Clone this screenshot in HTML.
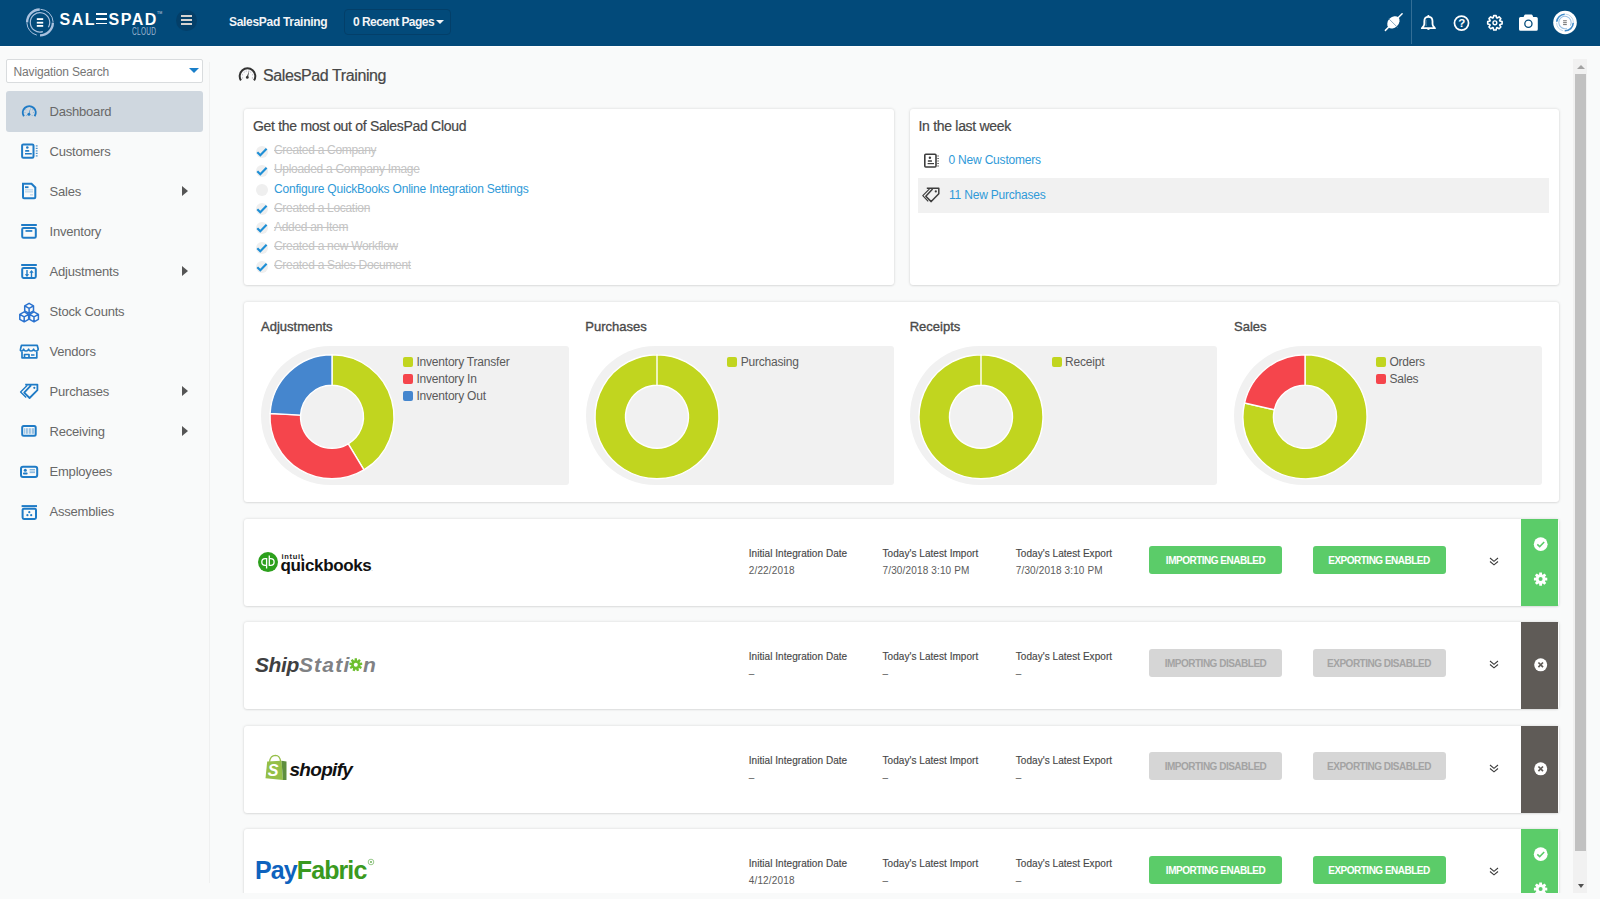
<!DOCTYPE html>
<html><head><meta charset="utf-8">
<style>
*{box-sizing:border-box}
html,body{margin:0;padding:0}
body{width:1600px;height:899px;overflow:hidden;position:relative;background:#f9fafa;font-family:"Liberation Sans",sans-serif;color:#555}
.a{position:absolute}
.nw{white-space:nowrap}
#top{left:0;top:0;width:1600px;height:46px;background:#024a7a}
.tb-txt{color:#f2f4f6;font-weight:700;font-size:12px;letter-spacing:-0.3px;line-height:14px}
#side-line{left:208.5px;top:62px;width:1px;height:821px;background:#eff0f0}
.nav{left:6px;width:197px;height:40px;border-radius:3px}
.nav .t{position:absolute;left:43.5px;top:14px;font-size:13px;line-height:14px;color:#686868;letter-spacing:-0.2px;white-space:nowrap}
.nav svg{position:absolute;left:13px;top:11px}
.nav .arr{position:absolute;left:176px;top:15px;width:0;height:0;border-left:6px solid #555;border-top:5px solid transparent;border-bottom:5px solid transparent}
.card{background:#fff;border-radius:3px;box-shadow:0 0 3px rgba(0,0,0,.15),0 1px 2px rgba(0,0,0,.06)}
.ctitle{font-size:14px;color:#474747;letter-spacing:-0.3px;line-height:16px;white-space:nowrap;-webkit-text-stroke:0.2px #474747}
.chk{font-size:12px;line-height:14px;color:#c4c4c4;text-decoration:line-through;white-space:nowrap;letter-spacing:-0.3px}
.link{color:#2f9ad8}
.ci{width:12px;height:12px;border-radius:6px;background:#efefef}
.chtitle{font-size:13px;color:#4a4a4a;line-height:14px;white-space:nowrap;font-weight:400;letter-spacing:0px;-webkit-text-stroke:0.35px #4a4a4a}
.panel{background:#f1f1f1;width:308px;height:139px;border-radius:70px 3px 3px 70px}
.leg{font-size:12px;line-height:14px;color:#5a5a5a;white-space:nowrap;letter-spacing:-0.2px}
.sq{width:10px;height:10px;border-radius:2px}
.lbl{font-size:10px;line-height:12px;color:#474747;white-space:nowrap;letter-spacing:0.05px;-webkit-text-stroke:0.15px #474747}
.val{font-size:10px;line-height:12px;color:#5b5b5b;white-space:nowrap;letter-spacing:0.15px;position:absolute;margin-top:1px}
.btn{width:133px;height:28px;border-radius:3px;font-size:10px;font-weight:700;letter-spacing:-0.5px;line-height:29px;text-align:center;white-space:nowrap}
.on{background:#5bcc69;color:#fff}
.off{background:#d6d6d6;color:#a3a3a3}
.strip{width:37px}
.sg{background:#5bcc69}
.sd{background:#5f5b57}
</style></head><body>

<!-- TOP BAR -->
<div class="a" style="left:0;top:46px;width:1600px;height:1px;background:#fff"></div>
<div id="top" class="a">
  <!-- logo -->
  <svg class="a" style="left:25px;top:7px" width="31" height="31" viewBox="0 0 31 31">
    <g fill="none" stroke="#a9c1de">
      <path d="M2.10 15.40 A12.9 12.9 0 0 1 14.77 2.50" stroke-width="2.3"/>
      <path d="M15.46 2.31 A13.1 13.1 0 0 1 28.09 14.94" stroke-width="1"/>
      <path d="M27.90 15.63 A12.9 12.9 0 0 1 15.00 28.30" stroke-width="2.3"/>
      <path d="M11.83 28.11 A13.1 13.1 0 0 1 1.92 16.09" stroke-width="1"/>
      <path d="M17.84 24.68 A9.7 9.7 0 1 1 23.40 20.25" stroke-width="1.2"/>
    </g>
    <g fill="#fff"><rect x="11.8" y="11.2" width="6.4" height="1.8"/><rect x="11.8" y="14.8" width="6.4" height="1.8"/><rect x="11.8" y="18" width="6.4" height="1.8"/></g>
  </svg>
  <div class="a nw" style="left:59.5px;top:10.5px;font-size:16px;font-weight:700;color:#fff;letter-spacing:1.5px;line-height:18px">SAL<span style="display:inline-block;width:11px;height:11.7px;position:relative;top:-0.2px;margin-right:1.5px;background:linear-gradient(#fff 0 2.1px,transparent 2.1px 4.8px,#fff 4.8px 6.9px,transparent 6.9px 9.6px,#fff 9.6px 11.7px)"></span>SPAD</div>
  <div class="a nw" style="left:157px;top:11px;font-size:3.5px;line-height:4px;color:#c8d4e2">TM</div>
  <div class="a nw" style="left:131.5px;top:26.1px;font-size:10px;color:#9fb6d2;line-height:11px;transform:scaleX(0.65);transform-origin:0 0;letter-spacing:0.5px">CLOUD</div>
  <!-- hamburger -->
  <div class="a" style="left:176px;top:10px;width:21px;height:21px;border-radius:50%;background:#033f69"></div>
  <div class="a" style="left:181px;top:15px;width:11px;height:2px;background:#d6d2cf"></div>
  <div class="a" style="left:181px;top:19px;width:11px;height:2px;background:#d6d2cf"></div>
  <div class="a" style="left:181px;top:22.5px;width:11px;height:2px;background:#d6d2cf"></div>
  <div class="a tb-txt nw" style="left:229px;top:15px">SalesPad Training</div>
  <div class="a" style="left:344px;top:9px;width:107px;height:26px;border:1px solid #033f69;border-radius:4px"></div>
  <div class="a tb-txt nw" style="left:353px;top:15px;letter-spacing:-0.55px">0 Recent Pages</div>
  <div class="a" style="left:436px;top:20px;width:0;height:0;border-top:4px solid #f2f4f6;border-left:4px solid transparent;border-right:4px solid transparent"></div>
  <!-- right icons -->
  <div class="a" style="left:1411px;top:0;width:1px;height:44px;background:#336e96"></div>
<svg class="a" style="left:1370px;top:0" width="230" height="46" viewBox="1370 0 230 46">
<path d="M1385.4 30.4 L1389.5 26.3 M1397.6 18.2 L1402.1 13.7" stroke="#fff" stroke-width="1.5" stroke-linecap="round"/>
<ellipse cx="1393.4" cy="22.3" rx="7" ry="5.2" transform="rotate(-45 1393.4 22.3)" fill="#fff"/>
<path d="M1388.9 18.8 L1397.5 27.4" stroke="#7d9fb8" stroke-width="0.9"/>
<path d="M1421.8 28.2 L1423.7 25.9 Q1424.3 25.1 1424.3 23.6 L1424.3 21.2 Q1424.3 16.9 1428.4 16.9 Q1432.5 16.9 1432.5 21.2 L1432.5 23.6 Q1432.5 25.1 1433.1 25.9 L1435 28.2 Z" fill="none" stroke="#fff" stroke-width="1.8" stroke-linejoin="round"/>
<rect x="1427.5" y="14.9" width="1.8" height="2.2" rx="0.6" fill="#fff"/>
<path d="M1426.3 28.6 Q1428.4 31.2 1430.5 28.6Z" fill="#fff"/>
<path d="M1426 20 Q1425.8 23.5 1426.2 26" stroke="#bcd0df" stroke-width="0.8" fill="none" opacity="0.7"/>
<circle cx="1461.5" cy="23.1" r="7.05" fill="none" stroke="#fff" stroke-width="1.7"/>
<text x="1461.8" y="27.4" font-family="Liberation Sans" font-weight="700" font-size="11.5" fill="#fff" text-anchor="middle">?</text>
<path d="M1493.18 17.79 L1493.70 15.60 L1496.10 15.60 L1496.62 17.79 L1497.23 18.04 L1499.14 16.86 L1500.84 18.56 L1499.66 20.47 L1499.91 21.08 L1502.10 21.60 L1502.10 24.00 L1499.91 24.52 L1499.66 25.13 L1500.84 27.04 L1499.14 28.74 L1497.23 27.56 L1496.62 27.81 L1496.10 30.00 L1493.70 30.00 L1493.18 27.81 L1492.57 27.56 L1490.66 28.74 L1488.96 27.04 L1490.14 25.13 L1489.89 24.52 L1487.70 24.00 L1487.70 21.60 L1489.89 21.08 L1490.14 20.47 L1488.96 18.56 L1490.66 16.86 L1492.57 18.04Z" fill="none" stroke="#fff" stroke-width="1.6" stroke-linejoin="round"/>
<circle cx="1494.9" cy="22.8" r="1.9" fill="none" stroke="#fff" stroke-width="1.4"/>
<path d="M1520.5 16.9 H1523.6 L1524.3 15.2 Q1524.6 14.5 1525.4 14.5 H1531.4 Q1532.2 14.5 1532.5 15.2 L1533.2 16.9 H1536.3 Q1537.8 16.9 1537.8 18.4 V29.2 Q1537.8 30.7 1536.3 30.7 H1520.5 Q1519 30.7 1519 29.2 V18.4 Q1519 16.9 1520.5 16.9Z" fill="#fff"/>
<circle cx="1528.4" cy="23.7" r="3.6" fill="none" stroke="#024a7a" stroke-width="1.3"/>
<circle cx="1565" cy="22.5" r="11.8" fill="#fff"/>
<g fill="none">
 <path d="M1556.73 21.78 A8.3 8.3 0 0 1 1564.71 14.21" stroke="#3f8bca" stroke-width="1.6"/>
 <path d="M1565.44 14.11 A8.4 8.4 0 0 1 1573.39 22.21" stroke="#b6d2ea" stroke-width="0.9"/>
 <path d="M1573.29 22.79 A8.3 8.3 0 0 1 1564.71 30.79" stroke="#3f8bca" stroke-width="1.6"/>
 <path d="M1562.83 30.61 A8.4 8.4 0 0 1 1556.61 22.79" stroke="#b6d2ea" stroke-width="0.9"/>
 <path d="M1566.81 28.43 A6.2 6.2 0 1 1 1570.37 25.60" stroke="#9cc3e6" stroke-width="1.1"/>
</g>
<g fill="#7d7d7d"><rect x="1563.1" y="20.2" width="3.7" height="1.1"/><rect x="1563.1" y="22.1" width="3.7" height="1.1"/><rect x="1563.1" y="24" width="3.7" height="1.1"/></g>
</svg>
</div>

<!-- SIDEBAR -->
<div class="a" style="left:6px;top:59px;width:197px;height:24px;background:#fff;border:1px solid #d9dcde;border-radius:2px"></div>
<div class="a nw" style="left:13.5px;top:64.5px;font-size:12px;line-height:14px;color:#767676;letter-spacing:-0.15px">Navigation Search</div>
<div class="a" style="left:189px;top:68px;width:0;height:0;border-top:5px solid #1a7fc9;border-left:5px solid transparent;border-right:5px solid transparent"></div>
<div id="side-line" class="a"></div>


<div class="a nav" style="top:91px;height:41px;background:#cfd7df"><span class="t">Dashboard</span></div>
<div class="a nav" style="top:131px"><span class="t">Customers</span></div>
<div class="a nav" style="top:171px"><span class="t">Sales</span><span class="arr"></span></div>
<div class="a nav" style="top:211px"><span class="t">Inventory</span></div>
<div class="a nav" style="top:251px"><span class="t">Adjustments</span><span class="arr"></span></div>
<div class="a nav" style="top:291px"><span class="t">Stock Counts</span></div>
<div class="a nav" style="top:331px"><span class="t">Vendors</span></div>
<div class="a nav" style="top:371px"><span class="t">Purchases</span><span class="arr"></span></div>
<div class="a nav" style="top:411px"><span class="t">Receiving</span><span class="arr"></span></div>
<div class="a nav" style="top:451px"><span class="t">Employees</span></div>
<div class="a nav" style="top:491px"><span class="t">Assemblies</span></div>

<svg class="a" style="left:0;top:0" width="210" height="540" viewBox="0 0 210 540">
<g fill="none" stroke="#1f7bc6" stroke-width="2">
 <path d="M23.9 116.3 A6.45 6.45 0 1 1 34.6 116.3"/>
 <rect x="22.1" y="144.4" width="11.4" height="13.3" rx="1.2"/>
 <path d="M23 183.7 H31.5 L35.3 187.5 V197.3 Q35.3 198.3 34.3 198.3 H24 Q23 198.3 23 197.3 Z"/>
 <rect x="22.2" y="228" width="13.6" height="9.7" rx="1.3"/>
 <rect x="22.2" y="268" width="13.6" height="9.9" rx="1.3"/>
 <rect x="22.2" y="426.1" width="13.5" height="9.7" rx="1.5"/>
 <rect x="21" y="466.8" width="16.2" height="10.1" rx="2"/>
 <rect x="22.6" y="508.8" width="13.4" height="10.1" rx="1.3"/>
</g>
<g fill="#1f7bc6">
 <path d="M28.6 114.2 L30.6 107.2 L29.4 114.6Z" />
 <circle cx="28.9" cy="114.3" r="1.5"/>
 <g opacity="0.45"><circle cx="25" cy="112.5" r="0.5"/><circle cx="25.9" cy="109.7" r="0.5"/><circle cx="33.5" cy="112.5" r="0.5"/><circle cx="32.6" cy="109.7" r="0.5"/><circle cx="26.4" cy="115.5" r="0.5"/><circle cx="32.1" cy="115.5" r="0.5"/></g>
 <circle cx="27.3" cy="147.5" r="1.3"/>
 <rect x="25.1" y="150.1" width="4.2" height="1.7" rx="0.6"/>
 <rect x="25" y="153" width="6.8" height="1.5"/>
 <g opacity="0.8"><rect x="35.8" y="145.3" width="1.8" height="1.2"/><rect x="35.8" y="147.8" width="1.8" height="1.2"/><rect x="35.8" y="150.3" width="1.8" height="1.2"/><rect x="35.8" y="152.8" width="1.8" height="1.2"/><rect x="35.8" y="155.3" width="1.8" height="1.2"/></g>
 <rect x="25" y="186.3" width="3.5" height="1.8"/>
 <g opacity="0.45"><rect x="25" y="189.5" width="8" height="0.8"/><rect x="25" y="191.5" width="8" height="0.8"/><rect x="30" y="194.5" width="3" height="0.8"/></g>
 <rect x="21.2" y="224" width="15.6" height="2"/>
 <rect x="25.5" y="230.1" width="6.8" height="1.7"/>
 <rect x="21.2" y="264" width="15.6" height="2"/>
 <path d="M26.3 270 H27.7 V274.3 H29.2 L27 277 L24.8 274.3 H26.3Z"/>
 <path d="M30.8 277 H32.2 V272.7 H33.7 L31.5 270 L29.3 272.7 H30.8Z"/>
 <g opacity="0.55"><rect x="24.3" y="428.2" width="0.9" height="5.6"/><rect x="25.9" y="428.2" width="0.9" height="5.6"/><rect x="27.3" y="428.2" width="0.9" height="5.6"/><rect x="28.9" y="428.2" width="0.9" height="5.6"/><rect x="30.3" y="428.2" width="0.9" height="5.6"/><rect x="31.9" y="428.2" width="0.9" height="5.6"/><rect x="33.2" y="428.2" width="0.9" height="5.6"/></g>
 <circle cx="25.3" cy="470.2" r="1.5"/>
 <rect x="23" y="472.5" width="4.6" height="2" rx="0.8"/>
 <g opacity="0.6"><rect x="29.6" y="469" width="5.4" height="0.9"/><rect x="29.6" y="470.6" width="5.4" height="0.9"/><rect x="29.6" y="472.2" width="5.4" height="0.9"/></g>
 <rect x="21.6" y="505.1" width="15.4" height="2"/>
 <circle cx="29.3" cy="512.2" r="1.1"/><circle cx="27.4" cy="515.2" r="1.1"/><circle cx="31.2" cy="515.2" r="1.1"/>
</g>
<g fill="none" stroke="#2a72cf" stroke-width="1.5" stroke-linejoin="round">
 <path d="M29.1 303.3 L33.5 305.8 V310.8 L29.1 313.3 L24.7 310.8 V305.8Z M24.7 305.8 L29.1 308.3 L33.5 305.8 M29.1 308.3 V313.3"/>
 <path d="M24.2 311.8 L28.6 314.3 V319.3 L24.2 321.8 L19.8 319.3 V314.3Z M19.8 314.3 L24.2 316.8 L28.6 314.3 M24.2 316.8 V321.8"/>
 <path d="M34 311.8 L38.4 314.3 V319.3 L34 321.8 L29.6 319.3 V314.3Z M29.6 314.3 L34 316.8 L38.4 314.3 M34 316.8 V321.8"/>
</g>
<g fill="none" stroke="#1f7bc6" stroke-width="1.7" stroke-linejoin="round">
 <path d="M21.5 345.3 H37.2 L38.2 349 Q38 351 36 351 Q34.2 351 33.6 349.2 Q33 351 31 351 Q29.2 351 28.6 349.2 Q28 351 26 351 Q24.2 351 23.6 349.2 Q23 351 21.2 351 Q20 350.5 20.5 349Z"/>
 <path d="M22 351.5 V357.8 H36.8 V351.5"/>
 <path d="M24.5 357.5 V354.5 H29 V357.5 M31 355 H34.5"/>
 <path d="M25.2 384.6 L32 384.6 L37.4 384.6 V390.2 L29.6 398 L24.2 392.6 L31 385.3" stroke-width="1.8"/>
 <path d="M27.3 385.2 L20.6 391.9 L26.2 397.6" stroke-width="1.4"/>
</g>
<circle cx="34.3" cy="387.8" r="1.1" fill="#1f7bc6"/>
</svg>
<!-- CONTENT -->
<div class="a nw" style="left:263px;top:66.5px;font-size:16px;line-height:18px;color:#474747;letter-spacing:-0.4px;-webkit-text-stroke:0.2px #474747">SalesPad Training</div>

<svg class="a" style="left:236px;top:64px" width="24" height="20" viewBox="236 64 24 20">
<path d="M240.96 80.35 A7.8 7.8 0 1 1 254.04 80.35" fill="none" stroke="#333" stroke-width="2"/>
<path d="M246.6 77.2 L249.2 70.4 L248 77.6Z" fill="#333"/><circle cx="247.3" cy="77.4" r="1.4" fill="#333"/>
<g fill="#8a7f9a" opacity="0.7"><circle cx="242.61" cy="77.88" r="0.55"/><circle cx="242.48" cy="74.75" r="0.55"/><circle cx="244.16" cy="72.12" r="0.55"/><circle cx="250.84" cy="72.12" r="0.55"/><circle cx="252.52" cy="74.75" r="0.55"/><circle cx="252.39" cy="77.88" r="0.55"/><circle cx="246.15" cy="71.08" r="0.55"/><circle cx="248.85" cy="71.08" r="0.55"/></g>
</svg>
<!-- card 1 -->
<div class="a card" style="left:244px;top:109px;width:649.5px;height:176px"></div>
<div class="a ctitle" style="left:253px;top:118px">Get the most out of SalesPad Cloud</div>
<div class="a ci" style="left:256px;top:145.7px"></div>
<svg class="a" style="left:256px;top:146.7px" width="12" height="10" viewBox="0 0 12 10"><path d="M1.3 5.2 L4.3 8.2 L10.6 1.8" fill="none" stroke="#1e8fd6" stroke-width="2.2"/></svg>
<div class="a chk" style="left:274px;top:143.2px">Created a Company</div>
<div class="a ci" style="left:256px;top:164.9px"></div>
<svg class="a" style="left:256px;top:165.9px" width="12" height="10" viewBox="0 0 12 10"><path d="M1.3 5.2 L4.3 8.2 L10.6 1.8" fill="none" stroke="#1e8fd6" stroke-width="2.2"/></svg>
<div class="a chk" style="left:274px;top:162.4px">Uploaded a Company Image</div>
<div class="a ci" style="left:256px;top:184.0px"></div>
<div class="a nw link" style="left:274px;top:181.5px;font-size:12px;line-height:14px;letter-spacing:-0.2px">Configure QuickBooks Online Integration Settings</div>
<div class="a ci" style="left:256px;top:203.2px"></div>
<svg class="a" style="left:256px;top:204.2px" width="12" height="10" viewBox="0 0 12 10"><path d="M1.3 5.2 L4.3 8.2 L10.6 1.8" fill="none" stroke="#1e8fd6" stroke-width="2.2"/></svg>
<div class="a chk" style="left:274px;top:200.7px">Created a Location</div>
<div class="a ci" style="left:256px;top:222.4px"></div>
<svg class="a" style="left:256px;top:223.4px" width="12" height="10" viewBox="0 0 12 10"><path d="M1.3 5.2 L4.3 8.2 L10.6 1.8" fill="none" stroke="#1e8fd6" stroke-width="2.2"/></svg>
<div class="a chk" style="left:274px;top:219.9px">Added an Item</div>
<div class="a ci" style="left:256px;top:241.6px"></div>
<svg class="a" style="left:256px;top:242.6px" width="12" height="10" viewBox="0 0 12 10"><path d="M1.3 5.2 L4.3 8.2 L10.6 1.8" fill="none" stroke="#1e8fd6" stroke-width="2.2"/></svg>
<div class="a chk" style="left:274px;top:239.1px">Created a new Workflow</div>
<div class="a ci" style="left:256px;top:260.7px"></div>
<svg class="a" style="left:256px;top:261.7px" width="12" height="10" viewBox="0 0 12 10"><path d="M1.3 5.2 L4.3 8.2 L10.6 1.8" fill="none" stroke="#1e8fd6" stroke-width="2.2"/></svg>
<div class="a chk" style="left:274px;top:258.2px">Created a Sales Document</div>

<!-- card 2 -->
<div class="a card" style="left:909.5px;top:109px;width:649px;height:176px"></div>
<div class="a ctitle" style="left:918.5px;top:118px">In the last week</div>
<div class="a" style="left:918px;top:178px;width:631px;height:34.5px;background:#f1f1f1"></div>
<div class="a nw link" style="left:948.5px;top:153px;font-size:12px;line-height:14px;letter-spacing:-0.2px">0 New Customers</div>
<div class="a nw link" style="left:949px;top:188px;font-size:12px;line-height:14px;letter-spacing:-0.2px">11 New Purchases</div>

<svg class="a" style="left:918px;top:150px" width="26" height="56" viewBox="918 150 26 56">
<g fill="none" stroke="#3d3d3d">
 <rect x="924.8" y="154.2" width="11.2" height="12.8" rx="1" stroke-width="1.6"/>
 <path d="M926.8 188.2 L933.2 188.2 L938.8 188.2 V193.8 L931.2 201.6 L925.8 196.2 L932.6 189" stroke-width="1.5" stroke-linejoin="round"/>
 <path d="M929.5 188.9 L922.8 195.6 L928.2 201.4" stroke-width="1.2" stroke-linejoin="round"/>
</g>
<g fill="#3d3d3d">
 <circle cx="929.9" cy="157.8" r="1.2"/>
 <rect x="927.8" y="160.2" width="4.2" height="1.6" rx="0.5"/>
 <rect x="927.6" y="163" width="6.4" height="1.2"/>
 <g opacity="0.8"><rect x="937.3" y="155.5" width="1.6" height="1"/><rect x="937.3" y="158" width="1.6" height="1"/><rect x="937.3" y="160.5" width="1.6" height="1"/><rect x="937.3" y="163" width="1.6" height="1"/><rect x="937.3" y="165.5" width="1.6" height="1"/></g>
 <circle cx="935.8" cy="191.4" r="1.1"/>
</g>
</svg>
<!-- charts card -->
<div class="a card" style="left:244px;top:302px;width:1314.5px;height:200px"></div>
<div class="a chtitle" style="left:261.0px;top:320px">Adjustments</div>
<div class="a panel" style="left:261.0px;top:346px"></div>
<svg class="a" style="left:261.0px;top:346px" width="142" height="142" viewBox="0 0 142 142"><path d="M71.00 8.80 A62 62 0 0 1 102.96 123.93 L87.24 97.79 A31.5 31.5 0 0 0 71.00 39.30 Z" fill="#c1d51f" stroke="#fff" stroke-width="1.4"/><path d="M102.96 123.93 A62 62 0 0 1 9.09 67.44 L39.55 69.09 A31.5 31.5 0 0 0 87.24 97.79 Z" fill="#f5454c" stroke="#fff" stroke-width="1.4"/><path d="M9.09 67.44 A62 62 0 0 1 71.00 8.80 L71.00 39.30 A31.5 31.5 0 0 0 39.55 69.09 Z" fill="#4586ce" stroke="#fff" stroke-width="1.4"/></svg>
<div class="a sq" style="left:403.0px;top:357px;background:#c1d51f"></div>
<div class="a leg" style="left:416.4px;top:355px">Inventory Transfer</div>
<div class="a sq" style="left:403.0px;top:374px;background:#f5454c"></div>
<div class="a leg" style="left:416.4px;top:372px">Inventory In</div>
<div class="a sq" style="left:403.0px;top:391px;background:#4586ce"></div>
<div class="a leg" style="left:416.4px;top:389px">Inventory Out</div>
<div class="a chtitle" style="left:585.3px;top:320px">Purchases</div>
<div class="a panel" style="left:585.8px;top:346px"></div>
<svg class="a" style="left:585.8px;top:346px" width="142" height="142" viewBox="0 0 142 142"><path d="M71.00 8.80 A62 62 0 1 1 70.99 8.80 L70.99 39.30 A31.5 31.5 0 1 0 71.00 39.30 Z" fill="#c1d51f" stroke="#fff" stroke-width="1.4"/></svg>
<div class="a sq" style="left:727.3px;top:357px;background:#c1d51f"></div>
<div class="a leg" style="left:740.7px;top:355px">Purchasing</div>
<div class="a chtitle" style="left:909.7px;top:320px">Receipts</div>
<div class="a panel" style="left:910px;top:346px;width:306.5px"></div>
<svg class="a" style="left:910px;top:346px" width="142" height="142" viewBox="0 0 142 142"><path d="M71.00 8.80 A62 62 0 1 1 70.99 8.80 L70.99 39.30 A31.5 31.5 0 1 0 71.00 39.30 Z" fill="#c1d51f" stroke="#fff" stroke-width="1.4"/></svg>
<div class="a sq" style="left:1051.7px;top:357px;background:#c1d51f"></div>
<div class="a leg" style="left:1065.1px;top:355px">Receipt</div>
<div class="a chtitle" style="left:1234.0px;top:320px">Sales</div>
<div class="a panel" style="left:1234.0px;top:346px"></div>
<svg class="a" style="left:1234.0px;top:346px" width="142" height="142" viewBox="0 0 142 142"><path d="M71.00 8.80 A62 62 0 1 1 10.55 57.00 L40.29 63.79 A31.5 31.5 0 1 0 71.00 39.30 Z" fill="#c1d51f" stroke="#fff" stroke-width="1.4"/><path d="M10.55 57.00 A62 62 0 0 1 71.00 8.80 L71.00 39.30 A31.5 31.5 0 0 0 40.29 63.79 Z" fill="#f5454c" stroke="#fff" stroke-width="1.4"/></svg>
<div class="a sq" style="left:1376.0px;top:357px;background:#c1d51f"></div>
<div class="a leg" style="left:1389.4px;top:355px">Orders</div>
<div class="a sq" style="left:1376.0px;top:374px;background:#f5454c"></div>
<div class="a leg" style="left:1389.4px;top:372px">Sales</div>

<!-- integration cards -->
<div class="a card" style="left:244px;top:519px;width:1314.5px;height:87px"></div>
<div class="a card" style="left:244px;top:622px;width:1314.5px;height:87px"></div>
<div class="a card" style="left:244px;top:725.5px;width:1314.5px;height:87px"></div>
<div class="a card" style="left:244px;top:829px;width:1314.5px;height:87px"></div>

<div class="a lbl" style="left:748.75px;top:548.3px">Initial Integration Date</div>
<div class="a val" style="left:748.75px;top:564px">2/22/2018</div>
<div class="a lbl" style="left:882.5px;top:548.3px">Today's Latest Import</div>
<div class="a val" style="left:882.5px;top:564px">7/30/2018 3:10 PM</div>
<div class="a lbl" style="left:1015.75px;top:548.3px">Today's Latest Export</div>
<div class="a val" style="left:1015.75px;top:564px">7/30/2018 3:10 PM</div>
<div class="a btn on" style="left:1149px;top:545.5px">IMPORTING ENABLED</div>
<div class="a btn on" style="left:1312.5px;top:545.5px">EXPORTING ENABLED</div>
<svg class="a" style="left:1489px;top:557px" width="10" height="9" viewBox="0 0 10 9"><path d="M1 1 L5 4.3 L9 1 M1 4.5 L5 7.8 L9 4.5" fill="none" stroke="#3a3a3a" stroke-width="1.1"/></svg>
<div class="a strip sg" style="left:1521px;top:519px;height:87px"></div>
<div class="a lbl" style="left:748.75px;top:651.3px">Initial Integration Date</div>
<div class="a val" style="left:748.75px;top:667px">–</div>
<div class="a lbl" style="left:882.5px;top:651.3px">Today's Latest Import</div>
<div class="a val" style="left:882.5px;top:667px">–</div>
<div class="a lbl" style="left:1015.75px;top:651.3px">Today's Latest Export</div>
<div class="a val" style="left:1015.75px;top:667px">–</div>
<div class="a btn off" style="left:1149px;top:648.5px">IMPORTING DISABLED</div>
<div class="a btn off" style="left:1312.5px;top:648.5px">EXPORTING DISABLED</div>
<svg class="a" style="left:1489px;top:660px" width="10" height="9" viewBox="0 0 10 9"><path d="M1 1 L5 4.3 L9 1 M1 4.5 L5 7.8 L9 4.5" fill="none" stroke="#3a3a3a" stroke-width="1.1"/></svg>
<div class="a strip sd" style="left:1521px;top:622px;height:87px"></div>
<div class="a lbl" style="left:748.75px;top:754.8px">Initial Integration Date</div>
<div class="a val" style="left:748.75px;top:770.5px">–</div>
<div class="a lbl" style="left:882.5px;top:754.8px">Today's Latest Import</div>
<div class="a val" style="left:882.5px;top:770.5px">–</div>
<div class="a lbl" style="left:1015.75px;top:754.8px">Today's Latest Export</div>
<div class="a val" style="left:1015.75px;top:770.5px">–</div>
<div class="a btn off" style="left:1149px;top:752.0px">IMPORTING DISABLED</div>
<div class="a btn off" style="left:1312.5px;top:752.0px">EXPORTING DISABLED</div>
<svg class="a" style="left:1489px;top:763.5px" width="10" height="9" viewBox="0 0 10 9"><path d="M1 1 L5 4.3 L9 1 M1 4.5 L5 7.8 L9 4.5" fill="none" stroke="#3a3a3a" stroke-width="1.1"/></svg>
<div class="a strip sd" style="left:1521px;top:725.5px;height:87px"></div>
<div class="a lbl" style="left:748.75px;top:858.3px">Initial Integration Date</div>
<div class="a val" style="left:748.75px;top:874px">4/12/2018</div>
<div class="a lbl" style="left:882.5px;top:858.3px">Today's Latest Import</div>
<div class="a val" style="left:882.5px;top:874px">–</div>
<div class="a lbl" style="left:1015.75px;top:858.3px">Today's Latest Export</div>
<div class="a val" style="left:1015.75px;top:874px">–</div>
<div class="a btn on" style="left:1149px;top:855.5px">IMPORTING ENABLED</div>
<div class="a btn on" style="left:1312.5px;top:855.5px">EXPORTING ENABLED</div>
<svg class="a" style="left:1489px;top:867px" width="10" height="9" viewBox="0 0 10 9"><path d="M1 1 L5 4.3 L9 1 M1 4.5 L5 7.8 L9 4.5" fill="none" stroke="#3a3a3a" stroke-width="1.1"/></svg>
<div class="a strip sg" style="left:1521px;top:829px;height:87px"></div>

<!-- QB logo -->
<svg class="a" style="left:256px;top:550px" width="24" height="24" viewBox="256 550 24 24">
 <circle cx="268" cy="562.1" r="10" fill="#2ca01c"/>
 <g fill="none" stroke="#fff" stroke-width="1.3">
  <path d="M266.6 565.4 H265.2 A3.4 3.4 0 0 1 265.2 558.6 H266.6 V568.6"/>
  <path d="M269.3 558.6 H270.7 A3.4 3.4 0 0 1 270.7 565.4 H269.3 V555.4"/>
 </g>
</svg>
<div class="a nw" style="left:281.5px;top:553px;font-size:7.5px;line-height:8px;font-weight:700;color:#222;letter-spacing:0.7px">intuit</div>
<div class="a nw" style="left:280.5px;top:555.5px;font-size:17px;line-height:20px;font-weight:700;color:#111;letter-spacing:-0.35px">quickbooks<span style="font-size:4px;color:#888">.</span></div>

<!-- ShipStation -->
<div class="a nw" style="left:255px;top:652.5px;font-size:21px;line-height:24px;font-weight:700;font-style:italic;color:#3f3f41;letter-spacing:-0.4px">Ship<span style="color:#808184;letter-spacing:1.2px">Stati</span><span style="display:inline-block;width:12.5px"></span><span style="color:#808184">n</span></div>
<svg class="a" style="left:348px;top:657px" width="16" height="16" viewBox="348 657 16 16">
 <path d="M354.53 660.38 L354.65 658.30 L356.95 658.30 L357.07 660.38 L357.67 660.60 L359.10 659.08 L360.86 660.56 L359.61 662.23 L359.93 662.78 L362.00 662.54 L362.40 664.80 L360.37 665.28 L360.26 665.91 L362.00 667.06 L360.86 669.04 L359.00 668.11 L358.50 668.52 L359.10 670.52 L356.95 671.30 L356.12 669.39 L355.48 669.39 L354.65 671.30 L352.50 670.52 L353.10 668.52 L352.60 668.11 L350.74 669.04 L349.60 667.06 L351.34 665.91 L351.23 665.28 L349.20 664.80 L349.60 662.54 L351.67 662.78 L351.99 662.23 L350.74 660.56 L352.50 659.08 L353.93 660.60Z" fill="#6dbf2e"/>
 <circle cx="355.8" cy="664.8" r="2" fill="#fff"/>
</svg>

<!-- Shopify -->
<svg class="a" style="left:264px;top:754px" width="24" height="28" viewBox="264 754 24 28">
 <path d="M269.5 761.8 Q270.3 755.6 275.4 755.4 Q280 755.4 280.6 761.8" fill="none" stroke="#95bf47" stroke-width="1.2"/>
 <path d="M267.2 761.5 L281.5 760.8 L283 780 L265.5 778.2 Z" fill="#95bf47"/>
 <path d="M281.5 760.8 L286.5 761.6 L286.5 780 L283 780 Z" fill="#5e8e3e"/>
 <text x="267.6" y="776.5" font-family="Liberation Sans" font-weight="700" font-style="italic" font-size="17" fill="#fff" transform="translate(272 770) scale(0.95 1) translate(-272 -770)">S</text>
</svg>
<div class="a nw" style="left:289.5px;top:759px;font-size:19px;line-height:22px;font-weight:700;font-style:italic;color:#111;letter-spacing:-0.7px">shopify</div>

<!-- PayFabric -->
<div class="a nw" style="left:255px;top:855.5px;font-size:25px;line-height:28px;font-weight:700;color:#0e62be;letter-spacing:-0.9px">Pay<span style="color:#3a9a20">Fabric</span></div>
<svg class="a" style="left:367px;top:858px" width="8" height="8" viewBox="0 0 8 8"><circle cx="4" cy="4" r="2.8" fill="none" stroke="#6db15a" stroke-width="0.7"/><circle cx="4" cy="4" r="1" fill="#6db15a"/></svg>

<svg class="a" style="left:1521px;top:519px" width="38" height="87" viewBox="1521 519 38 87"><circle cx="1540.7" cy="544.2" r="6.9" fill="#fff"/><path d="M1537.3 544.4000000000001 L1539.7 546.6 L1544.2 542.0" fill="none" stroke="#5bcc69" stroke-width="1.5"/><path d="M1539.12 574.53 L1539.27 572.43 L1541.93 572.43 L1542.08 574.53 L1542.78 574.82 L1544.38 573.45 L1546.25 575.32 L1544.88 576.92 L1545.17 577.62 L1547.27 577.77 L1547.27 580.43 L1545.17 580.58 L1544.88 581.28 L1546.25 582.88 L1544.38 584.75 L1542.78 583.38 L1542.08 583.67 L1541.93 585.77 L1539.27 585.77 L1539.12 583.67 L1538.42 583.38 L1536.82 584.75 L1534.95 582.88 L1536.32 581.28 L1536.03 580.58 L1533.93 580.43 L1533.93 577.77 L1536.03 577.62 L1536.32 576.92 L1534.95 575.32 L1536.82 573.45 L1538.42 574.82Z" fill="#fff"/><circle cx="1540.6" cy="579.1" r="4" fill="#fff"/><circle cx="1540.6" cy="579.1" r="2" fill="#5bcc69"/></svg>
<svg class="a" style="left:1521px;top:622px" width="38" height="87" viewBox="1521 622 38 87"><circle cx="1540.7" cy="664.8" r="6.5" fill="#fff"/><path d="M1538.4 662.5 L1543 667.0999999999999 M1543 662.5 L1538.4 667.0999999999999" stroke="#5f5b57" stroke-width="1.7"/></svg>
<svg class="a" style="left:1521px;top:725.5px" width="38" height="87" viewBox="1521 725.5 38 87"><circle cx="1540.7" cy="768.3" r="6.5" fill="#fff"/><path d="M1538.4 766.0 L1543 770.5999999999999 M1543 766.0 L1538.4 770.5999999999999" stroke="#5f5b57" stroke-width="1.7"/></svg>
<svg class="a" style="left:1521px;top:829px" width="38" height="87" viewBox="1521 829 38 87"><circle cx="1540.7" cy="854.2" r="6.9" fill="#fff"/><path d="M1537.3 854.4000000000001 L1539.7 856.6 L1544.2 852.0" fill="none" stroke="#5bcc69" stroke-width="1.5"/><path d="M1539.12 884.53 L1539.27 882.43 L1541.93 882.43 L1542.08 884.53 L1542.78 884.82 L1544.38 883.45 L1546.25 885.32 L1544.88 886.92 L1545.17 887.62 L1547.27 887.77 L1547.27 890.43 L1545.17 890.58 L1544.88 891.28 L1546.25 892.88 L1544.38 894.75 L1542.78 893.38 L1542.08 893.67 L1541.93 895.77 L1539.27 895.77 L1539.12 893.67 L1538.42 893.38 L1536.82 894.75 L1534.95 892.88 L1536.32 891.28 L1536.03 890.58 L1533.93 890.43 L1533.93 887.77 L1536.03 887.62 L1536.32 886.92 L1534.95 885.32 L1536.82 883.45 L1538.42 884.82Z" fill="#fff"/><circle cx="1540.6" cy="889.1" r="4" fill="#fff"/><circle cx="1540.6" cy="889.1" r="2" fill="#5bcc69"/></svg>
<!-- bottom cover (scroll container clip) -->
<div class="a" style="left:210px;top:893px;width:1390px;height:6px;background:#f9fafa"></div>

<!-- scrollbar -->
<div class="a" style="left:1573px;top:59px;width:14px;height:834px;background:#f1f1f1"></div>
<div class="a" style="left:1575px;top:73.5px;width:11px;height:777px;background:#c1c1c1"></div>
<div class="a" style="left:1577px;top:65px;width:0;height:0;border-bottom:4px solid #a3a3a3;border-left:4px solid transparent;border-right:4px solid transparent"></div>
<div class="a" style="left:1577.5px;top:884px;width:0;height:0;border-top:4px solid #505050;border-left:3.5px solid transparent;border-right:3.5px solid transparent"></div>

</body></html>
